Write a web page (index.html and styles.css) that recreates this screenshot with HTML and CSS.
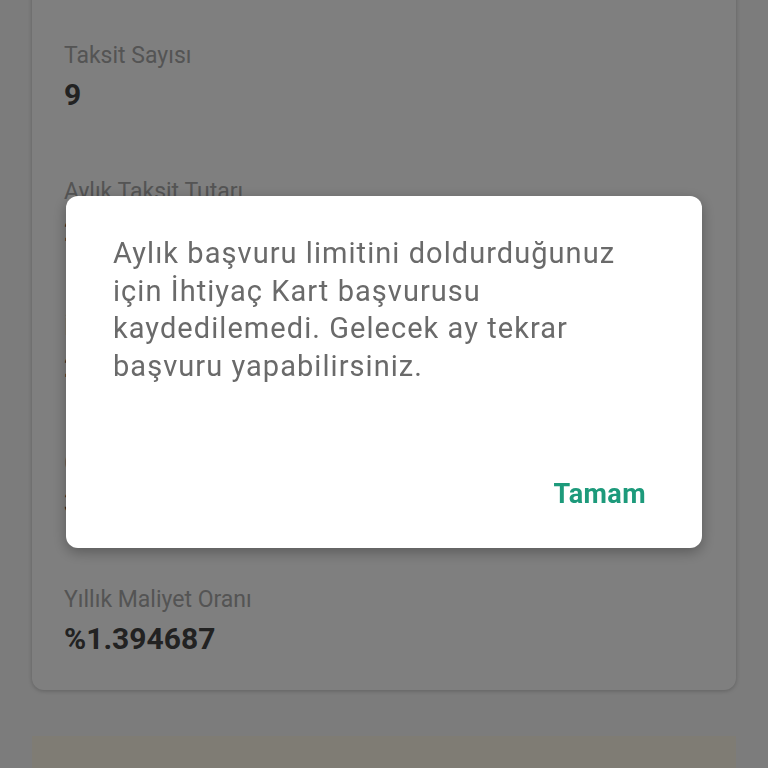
FILE: index.html
```html
<!DOCTYPE html>
<html lang="tr">
<head>
<meta charset="utf-8">
<title>İhtiyaç Kart</title>
<link rel="stylesheet" href="styles.css">
</head>
<body>
<main class="page">
  <section class="card">
    <div class="item">
      <div class="label">Taksit Sayısı</div>
      <div class="value">9</div>
    </div>
    <div class="item">
      <div class="label">Aylık Taksit Tutarı</div>
      <div class="value">2.153,45 TL</div>
    </div>
    <div class="item">
      <div class="label">İşlem Ücreti</div>
      <div class="value">250,00 TL</div>
    </div>
    <div class="item">
      <div class="label">Geri Ödeme Toplamı</div>
      <div class="value">3.180,12 TL</div>
    </div>
    <div class="item">
      <div class="label">Yıllık Maliyet Oranı</div>
      <div class="value">%1.394687</div>
    </div>
  </section>
  <section class="notice"></section>
</main>

<div class="overlay">
  <div class="dialog" role="alertdialog">
    <p class="message">Aylık başvuru limitini doldurduğunuz için İhtiyaç Kart başvurusu kaydedilemedi. Gelecek ay tekrar başvuru yapabilirsiniz.</p>
    <div class="actions">
      <button class="btn-text">Tamam</button>
    </div>
  </div>
</div>
</body>
</html>
```

FILE: styles.css
```css
html, body {
  margin: 0;
  padding: 0;
  height: 100%;
  overflow: hidden;
}

body {
  background: #f8f8f8;
  font-family: Roboto, "Noto Sans", "Liberation Sans", sans-serif;
}

.page {
  padding: 0 32px;
}

.card {
  margin-top: -24px;
  background: #ffffff;
  border-radius: 12px;
  box-shadow: 0 1px 4px rgba(0, 0, 0, 0.22);
  padding: 66px 32px 33px;
  display: flex;
  flex-direction: column;
  gap: 65px;
}

.item {
  display: flex;
  flex-direction: column;
  gap: 7px;
}

.label {
  font-size: 23px;
  line-height: 28px;
  color: #a8a8a8;
}

.value {
  font-size: 30px;
  line-height: 36px;
  font-weight: 700;
  color: #444444;
}

.notice {
  margin-top: 46px;
  height: 80px;
  background: #fef8e9;
}

.overlay {
  position: fixed;
  inset: 0;
  background: rgba(0, 0, 0, 0.5);
  display: flex;
  align-items: center;
  justify-content: center;
  padding-bottom: 24px;
}

.dialog {
  width: 636px;
  height: 352px;
  box-sizing: border-box;
  background: #ffffff;
  border-radius: 12px;
  box-shadow: 0 4px 14px rgba(0, 0, 0, 0.3);
  padding: 39px 47px 38px;
  display: flex;
  flex-direction: column;
  justify-content: space-between;
}

.message {
  margin: 0;
  font-size: 29px;
  line-height: 37.6px;
  letter-spacing: 1.05px;
  color: #6a6a6a;
}

.actions {
  display: flex;
  justify-content: flex-end;
  padding-right: 9px;
}

.btn-text {
  border: 0;
  background: none;
  padding: 0;
  font-family: Roboto, "Noto Sans", "Liberation Sans", sans-serif;
  font-size: 27px;
  line-height: 32px;
  letter-spacing: 0.4px;
  font-weight: 700;
  color: #1d9a7b;
}
```
